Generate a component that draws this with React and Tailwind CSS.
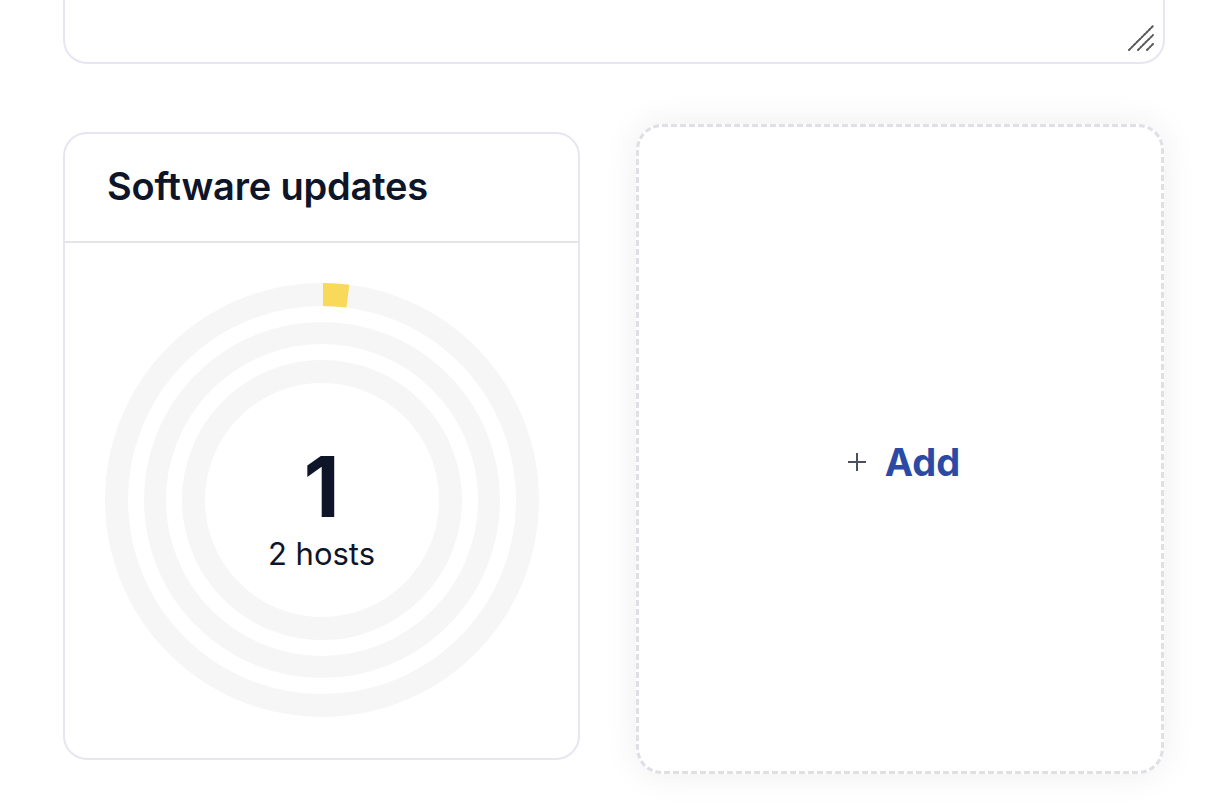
import React from "react";

const font = { fontFamily: "Inter, 'Noto Sans', sans-serif" };

function Rings() {
  const c = 217;
  const r1 = 205.5;
  const circ = 2 * Math.PI * r1;
  return (
    <svg width="434" height="434" viewBox="0 0 434 434" className="block">
      <circle cx={c} cy={c} r={r1} fill="none" stroke="#f6f6f6" strokeWidth="23" />
      <circle cx={c} cy={c} r="167" fill="none" stroke="#f6f6f6" strokeWidth="22" />
      <circle cx={c} cy={c} r="128.5" fill="none" stroke="#f6f6f6" strokeWidth="23" />
      <circle
        cx={c}
        cy={c}
        r={r1}
        fill="none"
        stroke="#f8d95a"
        strokeWidth="23"
        strokeDasharray={`25 ${circ}`}
        strokeDashoffset="-1"
        transform={`rotate(-90 ${c} ${c})`}
      />
    </svg>
  );
}

export default function App() {
  return (
    <div className="min-h-[812px] w-[1214px] bg-white pl-[63px] pr-[49px]" style={font}>
      {/* bottom of the notes textarea */}
      <div className="relative h-[64px] w-full rounded-b-[24px] border-2 border-t-0 border-[#e6e6f2] bg-white">
        <svg
          width="30"
          height="30"
          viewBox="0 0 30 30"
          className="absolute bottom-[8px] right-[6px]"
        >
          <g stroke="#555" strokeWidth="2" strokeDasharray="2 1.5" strokeLinecap="round">
            <line x1="2" y1="26" x2="26" y2="2" />
            <line x1="11" y1="26" x2="26" y2="11" />
            <line x1="20" y1="26" x2="26" y2="20" />
          </g>
        </svg>
      </div>

      <div className="mt-[60px] flex items-start gap-[56px]">
        <div className="mt-[8px] flex h-[628px] w-[517px] shrink-0 flex-col rounded-[24px] border-2 border-[#e6e6f2] bg-white">
          <div className="flex h-[109px] items-center border-b-2 border-[#e4e4ec] pl-[42px]">
            <h2 className="pb-[2px] text-[38px] font-semibold tracking-[-0.2px] text-[#0f1529]">
              Software updates
            </h2>
          </div>
          <div className="relative flex flex-1 items-start justify-center pl-[-2px] pt-[40px]">
            <Rings />
            <div className="absolute left-0 right-0 top-[198px] flex flex-col items-center text-[#0f1529]">
              <div className="text-[84px] font-bold leading-[92px]">1</div>
              <div className="mt-[2px] text-[31px] leading-[38px]">2 hosts</div>
            </div>
          </div>
        </div>

        <div className="flex h-[650px] w-[528px] shrink-0 items-center justify-center rounded-[26px] border-[3px] border-dashed border-[#dfe0e6] bg-white pl-[7px] pt-[26px] shadow-[0_0_36px_rgba(0,0,0,0.07)]">
          <div className="flex items-center gap-[18px]">
            <svg width="20" height="20" viewBox="0 0 20 20">
              <path d="M10 1v18M1 10h18" stroke="#4b5060" strokeWidth="2" />
            </svg>
            <span className="text-[38px] font-bold leading-none text-[#2b4aa5]">Add</span>
          </div>
        </div>
      </div>
    </div>
  );
}
